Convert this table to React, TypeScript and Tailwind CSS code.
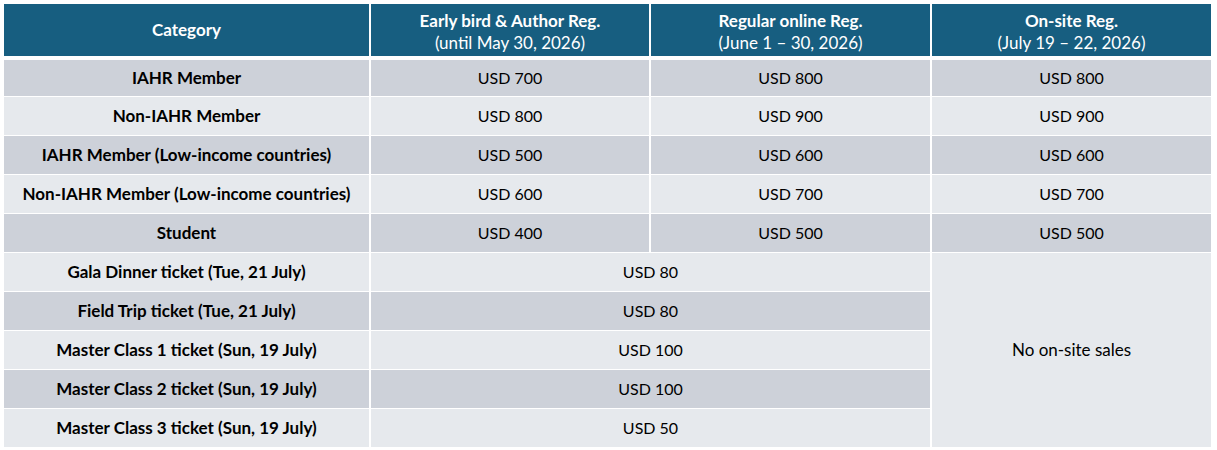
import React from "react";

const rows = [
  { cat: "IAHR Member", v: ["USD 700", "USD 800", "USD 800"] },
  { cat: "Non-IAHR Member", v: ["USD 800", "USD 900", "USD 900"] },
  { cat: "IAHR Member (Low-income countries)", v: ["USD 500", "USD 600", "USD 600"] },
  { cat: "Non-IAHR Member (Low-income countries)", v: ["USD 600", "USD 700", "USD 700"] },
  { cat: "Student", v: ["USD 400", "USD 500", "USD 500"] },
];

const tickets = [
  { cat: "Gala Dinner ticket (Tue, 21 July)", v: "USD 80" },
  { cat: "Field Trip ticket (Tue, 21 July)", v: "USD 80" },
  { cat: "Master Class 1 ticket (Sun, 19 July)", v: "USD 100" },
  { cat: "Master Class 2 ticket (Sun, 19 July)", v: "USD 100" },
  { cat: "Master Class 3 ticket (Sun, 19 July)", v: "USD 50" },
];

const DARK = "bg-[#cdd1d9]";
const LIGHT = "bg-[#e6e9ed]";

export default function App() {
  return (
    <div className="bg-white w-[1217px] h-[450px] pt-[4px] pl-[4px] text-black text-[16px]" style={{ fontFamily: "Lato, 'Liberation Sans', sans-serif" }}>
      <div className="grid grid-cols-[365px_278px_279px_279px] gap-x-[2px] w-[1207px]">
        {/* header */}
        <div className="h-[52px] bg-[#175e80] text-white font-bold text-[17px] flex items-center justify-center">Category</div>
        <div className="h-[52px] bg-[#175e80] text-white flex flex-col items-center justify-center leading-[22px] pt-[3px]">
          <span className="font-bold text-[17px]">Early bird &amp; Author Reg.</span>
          <span className="text-[17px]">(until May 30, 2026)</span>
        </div>
        <div className="h-[52px] bg-[#175e80] text-white flex flex-col items-center justify-center leading-[22px] pt-[3px]">
          <span className="font-bold text-[17px]">Regular online Reg.</span>
          <span className="text-[17px]">(June 1 – 30, 2026)</span>
        </div>
        <div className="h-[52px] bg-[#175e80] text-white flex flex-col items-center justify-center leading-[22px] pt-[3px]">
          <span className="font-bold text-[17px]">On-site Reg.</span>
          <span className="text-[17px]">(July 19 – 22, 2026)</span>
        </div>
      </div>
      <div className="grid grid-cols-[365px_278px_279px_279px] grid-rows-[36px_repeat(9,38px)] gap-x-[2px] gap-y-[1px] w-[1207px] mt-[4px]">
        {rows.map((r, i) => {
          const bg = i % 2 === 0 ? DARK : LIGHT;
          return (
            <React.Fragment key={r.cat}>
              <div className={`${bg} font-bold text-[17px] flex items-center justify-center`}>{r.cat}</div>
              {r.v.map((x, j) => (
                <div key={j} className={`${bg} flex items-center justify-center`}>{x}</div>
              ))}
            </React.Fragment>
          );
        })}
        {tickets.map((t, i) => {
          const bg = i % 2 === 0 ? LIGHT : DARK;
          return (
            <React.Fragment key={t.cat}>
              <div className={`${bg} font-bold text-[17px] flex items-center justify-center`} style={{ gridColumn: 1, gridRow: 6 + i }}>{t.cat}</div>
              <div className={`${bg} flex items-center justify-center`} style={{ gridColumn: "2 / span 2", gridRow: 6 + i }}>{t.v}</div>
            </React.Fragment>
          );
        })}
        <div className={`${LIGHT} text-[17px] flex items-center justify-center`} style={{ gridColumn: 4, gridRow: "6 / span 5" }}>No on-site sales</div>
      </div>
    </div>
  );
}
